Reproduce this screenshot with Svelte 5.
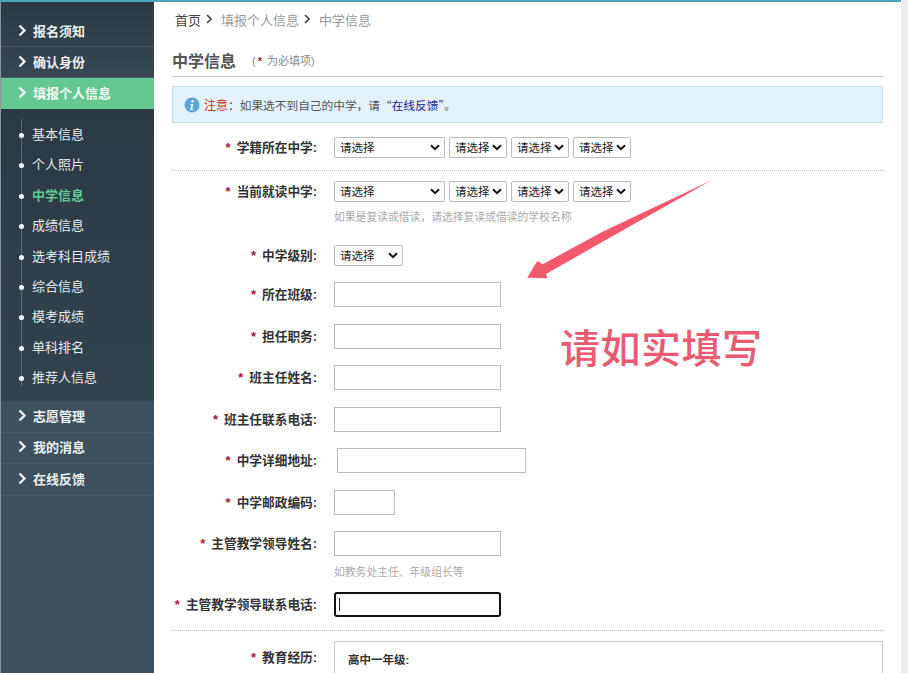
<script>
  const top = ['报名须知', '确认身份'];
  const subs = ['基本信息', '个人照片', '中学信息', '成绩信息', '选考科目成绩', '综合信息', '模考成绩', '单科排名', '推荐人信息'];
  const bottom = ['志愿管理', '我的消息', '在线反馈'];
</script>

{#snippet chev()}
  <svg class="chev" width="9" height="13" viewBox="0 0 9 13"><path d="M1.500 1.500 6.500 6.500 1.500 11.500" fill="none" stroke="currentColor" stroke-width="2.400"/></svg>
{/snippet}

{#snippet crumbChev()}
  <svg class="cc" width="6" height="10" viewBox="0 0 6 10"><path d="M1 1 5 5 1 9" fill="none" stroke="#444" stroke-width="1.600"/></svg>
{/snippet}

{#snippet sel(cls = 'narrow')}
  <div class="sel {cls}"><span>请选择</span><svg width="10" height="7" viewBox="0 0 10 7"><path d="M1 1.200 5 5.200 9 1.200" fill="none" stroke="#111" stroke-width="2"/></svg></div>
{/snippet}

<div class="page">
  <div class="wrap">
    <aside class="side">
      <div class="upper">
        {#each top as t}
          <div class="main">{@render chev()}<span>{t}</span></div>
        {/each}
        <div class="main on">{@render chev()}<span>填报个人信息</span></div>
      </div>
      <ul class="subs">
        {#each subs as s}
          <li class:cur={s === '中学信息'}><i></i>{s}</li>
        {/each}
      </ul>
      <div class="lower">
        {#each bottom as t}
          <div class="main">{@render chev()}<span>{t}</span></div>
        {/each}
      </div>
    </aside>

    <main class="content">
      <nav class="crumb">
        <b>首页</b>{@render crumbChev()}<span>填报个人信息</span>{@render crumbChev()}<span>中学信息</span>
      </nav>
      <header class="title">
        <h1>中学信息</h1><small>(<u>*</u>为必填项)</small>
      </header>
      <div class="notice">
        <svg width="16" height="16" viewBox="0 0 16 16"><circle cx="8" cy="8" r="7.500" fill="#5ba4dc"/><circle cx="8.600" cy="4.300" r="1.200" fill="#fff"/><path d="M6.500 7h2.700l-1 5h1v.9H6.300l1-5H6.500z" fill="#fff"/></svg>
        <span class="warn">注意</span><span class="ntext">：如果选不到自己的中学，请“<a href="#top">在线反馈</a>”。</span>
      </div>

      <section class="row r1 dotted">
        <label><u>*</u>学籍所在中学:</label>
        <div class="ctl">{@render sel('wide')}{@render sel()}{@render sel()}{@render sel()}</div>
      </section>
      <section class="row r2">
        <label><u>*</u>当前就读中学:</label>
        <div class="ctl">{@render sel('wide')}{@render sel()}{@render sel()}{@render sel()}</div>
      </section>
      <p class="hint h1">如果是复读或借读，请选择复读或借读的学校名称</p>
      <section class="row r3">
        <label><u>*</u>中学级别:</label>
        <div class="ctl">{@render sel('mid')}</div>
      </section>
      <section class="row r4"><label><u>*</u>所在班级:</label><input /></section>
      <section class="row r5"><label><u>*</u>担任职务:</label><input /></section>
      <section class="row r5"><label><u>*</u>班主任姓名:</label><input /></section>
      <section class="row r5"><label><u>*</u>班主任联系电话:</label><input /></section>
      <section class="row r5"><label><u>*</u>中学详细地址:</label><input class="addr" /></section>
      <section class="row r5"><label><u>*</u>中学邮政编码:</label><input class="zip" /></section>
      <section class="row r5"><label><u>*</u>主管教学领导姓名:</label><input /></section>
      <p class="hint h2">如教务处主任、年级组长等</p>
      <section class="row r6 dotted"><label><u>*</u>主管教学领导联系电话:</label><div class="focus"><i></i></div></section>
      <section class="row r7">
        <label><u>*</u>教育经历:</label>
        <div class="edu"><b>高中一年级:</b></div>
      </section>

      <svg class="arrow" width="195" height="110" viewBox="0 0 195 110"><path d="M192 5 83 56.500 22.700 89.300 17.300 86 7.300 102.700 27.300 103.300 26 99 83 66.500Z" fill="#f3586c"/></svg>
      <div class="note">请如实填写</div>
    </main>
  </div>
  <div class="scroll"></div>
</div>

<style>
  :global(body) { margin: 0; }
  .page {
    width: 908px; height: 673px; overflow: hidden; display: flex; background: #fff;
    font-family: "Liberation Sans", "Noto Sans CJK SC", sans-serif; color: #333;
  }
  .wrap { flex: 1; min-width: 0; display: flex; border-top: 2px solid #4da3b8; }
  .scroll { width: 7px; flex: none; background: #ededed; }
  .side { width: 154px; flex: none; background: #3e505c; border-left: 1px solid #8b959b; box-sizing: border-box; color: #fff; }
  .upper { background: linear-gradient(#2b3943, #3c4d59); padding-top: 14px; }
  .main { height: 31px; display: flex; align-items: center; gap: 6px; padding: 0 0 2px 17px; font-size: 13px; font-weight: 700; color: #eef1f2; border-bottom: 1px solid #4a5b66; box-sizing: border-box; }
  .main .chev { flex: none; }
  .upper .main.on { background: #64c894; border-bottom: 0; color: #f4fbf7; }
  .subs { list-style: none; margin: 0; padding: 11px 0 8px; height: 292px; box-sizing: border-box; background: linear-gradient(#2b3943, #33434e); position: relative; }
  .subs::before { content: ""; position: absolute; left: 20px; top: 10px; bottom: 14px; width: 1px; background: #5b6b75; }
  .subs li { height: 30.400px; line-height: 30px; padding-left: 31px; font-size: 13px; color: #e6eaec; position: relative; }
  .subs li i { position: absolute; left: 18px; top: 13px; width: 5px; height: 5px; border-radius: 50%; background: #fff; }
  .subs li.cur { color: #64c894; font-weight: 700; }
  .lower .main { height: 31.500px; }

  .content { flex: 1; padding: 0 18px; position: relative; min-width: 0; }
  .crumb { height: 36px; box-sizing: border-box; padding: 0 0 2px 3px; display: flex; align-items: center; font-size: 13px; color: #999; }
  .crumb b { font-weight: 400; color: #444; }
  .cc { margin: 0 9.500px 0 4.500px; flex: none; }
  .title { height: 39px; box-sizing: border-box; padding-top: 5px; display: flex; align-items: center; border-bottom: 1px solid #ccc; }
  .title h1 { margin: 0; font-size: 16px; color: #555; font-weight: 700; }
  .title small { margin-left: 16px; font-size: 11px; color: #888; }
  .title u, label u { text-decoration: none; color: #a8173a; font-weight: 700; }
  .title u { margin: 0 5px 0 2px; }
  .notice { margin-top: 9px; height: 37px; display: flex; align-items: center; padding-left: 11px; background: #e2f1fa; border: 1px solid #c4e0ea; box-sizing: border-box; font-size: 12px; color: #555; }
  .notice svg { margin-right: 4px; }
  .warn { color: #c0341a; }
  .ntext { font-family: "Noto Sans CJK SC", sans-serif; font-size: 11.700px; }
  .notice a { color: #1a1a9c; text-decoration: none; }
  .row { display: flex; align-items: center; }
  label { width: 145px; flex: none; box-sizing: content-box; padding-bottom: 2px; text-align: right; font-size: 12.700px; font-weight: 700; color: #333; margin-right: 17px; white-space: nowrap; }
  label u { margin-right: 6px; font-size: 13px; }
  .ctl { display: flex; gap: 4px; }
  .sel { height: 21px; box-sizing: border-box; border: 1px solid #bbb; border-radius: 2px; display: flex; align-items: center; justify-content: space-between; padding: 0 4px 0 5px; font-size: 11.500px; color: #222; background: #fff; }
  .sel.wide { width: 111px; }
  .sel.narrow { width: 58px; }
  .sel.mid { width: 69px; }
  .r1 { margin-top: 13px; height: 22px; padding-bottom: 12px; }
  .dotted { border-bottom: 1px dotted #bbb; }
  .r2 { margin-top: 8px; height: 24px; }
  .hint { margin: 0 0 0 162px; font-size: 10.800px; color: #aaa; }
  .hint.h1 { margin-top: 7px; height: 15px; line-height: 15px; }
  .r3 { margin-top: 18px; height: 24px; }
  input { width: 167px; height: 25px; box-sizing: border-box; border: 1px solid #bbb; padding: 0; background: #fff; display: block; }
  .r4 { margin-top: 15px; height: 25px; }
  .r5 { margin-top: 16.500px; height: 25px; }
  .addr { width: 189px; margin-left: 3px; }
  .zip { width: 61px; }
  .hint.h2 { margin-top: 9px; height: 14px; line-height: 14px; }
  .r6 { margin-top: 13px; height: 25px; padding-bottom: 13px; }
  .focus { width: 167px; height: 25px; box-sizing: border-box; border: 2px solid #111; border-radius: 3px; position: relative; }
  .focus i { position: absolute; left: 3px; top: 4px; width: 1px; height: 13px; background: #222; }
  .r7 { margin-top: 10px; align-items: flex-start; }
  .r7 label { padding-top: 6px; }
  .edu { flex: 1; height: 80px; box-sizing: border-box; border: 1px solid #ccc; padding: 9px 13px; font-size: 11.500px; }
  .arrow { position: absolute; left: 366px; top: 173px; }
  .note { position: absolute; left: 406px; top: 318px; font-size: 40px; line-height: 52px; letter-spacing: 0.500px; font-weight: 500; color: #ea5a70; white-space: nowrap; font-family: "Noto Sans CJK SC", sans-serif; }
</style>
